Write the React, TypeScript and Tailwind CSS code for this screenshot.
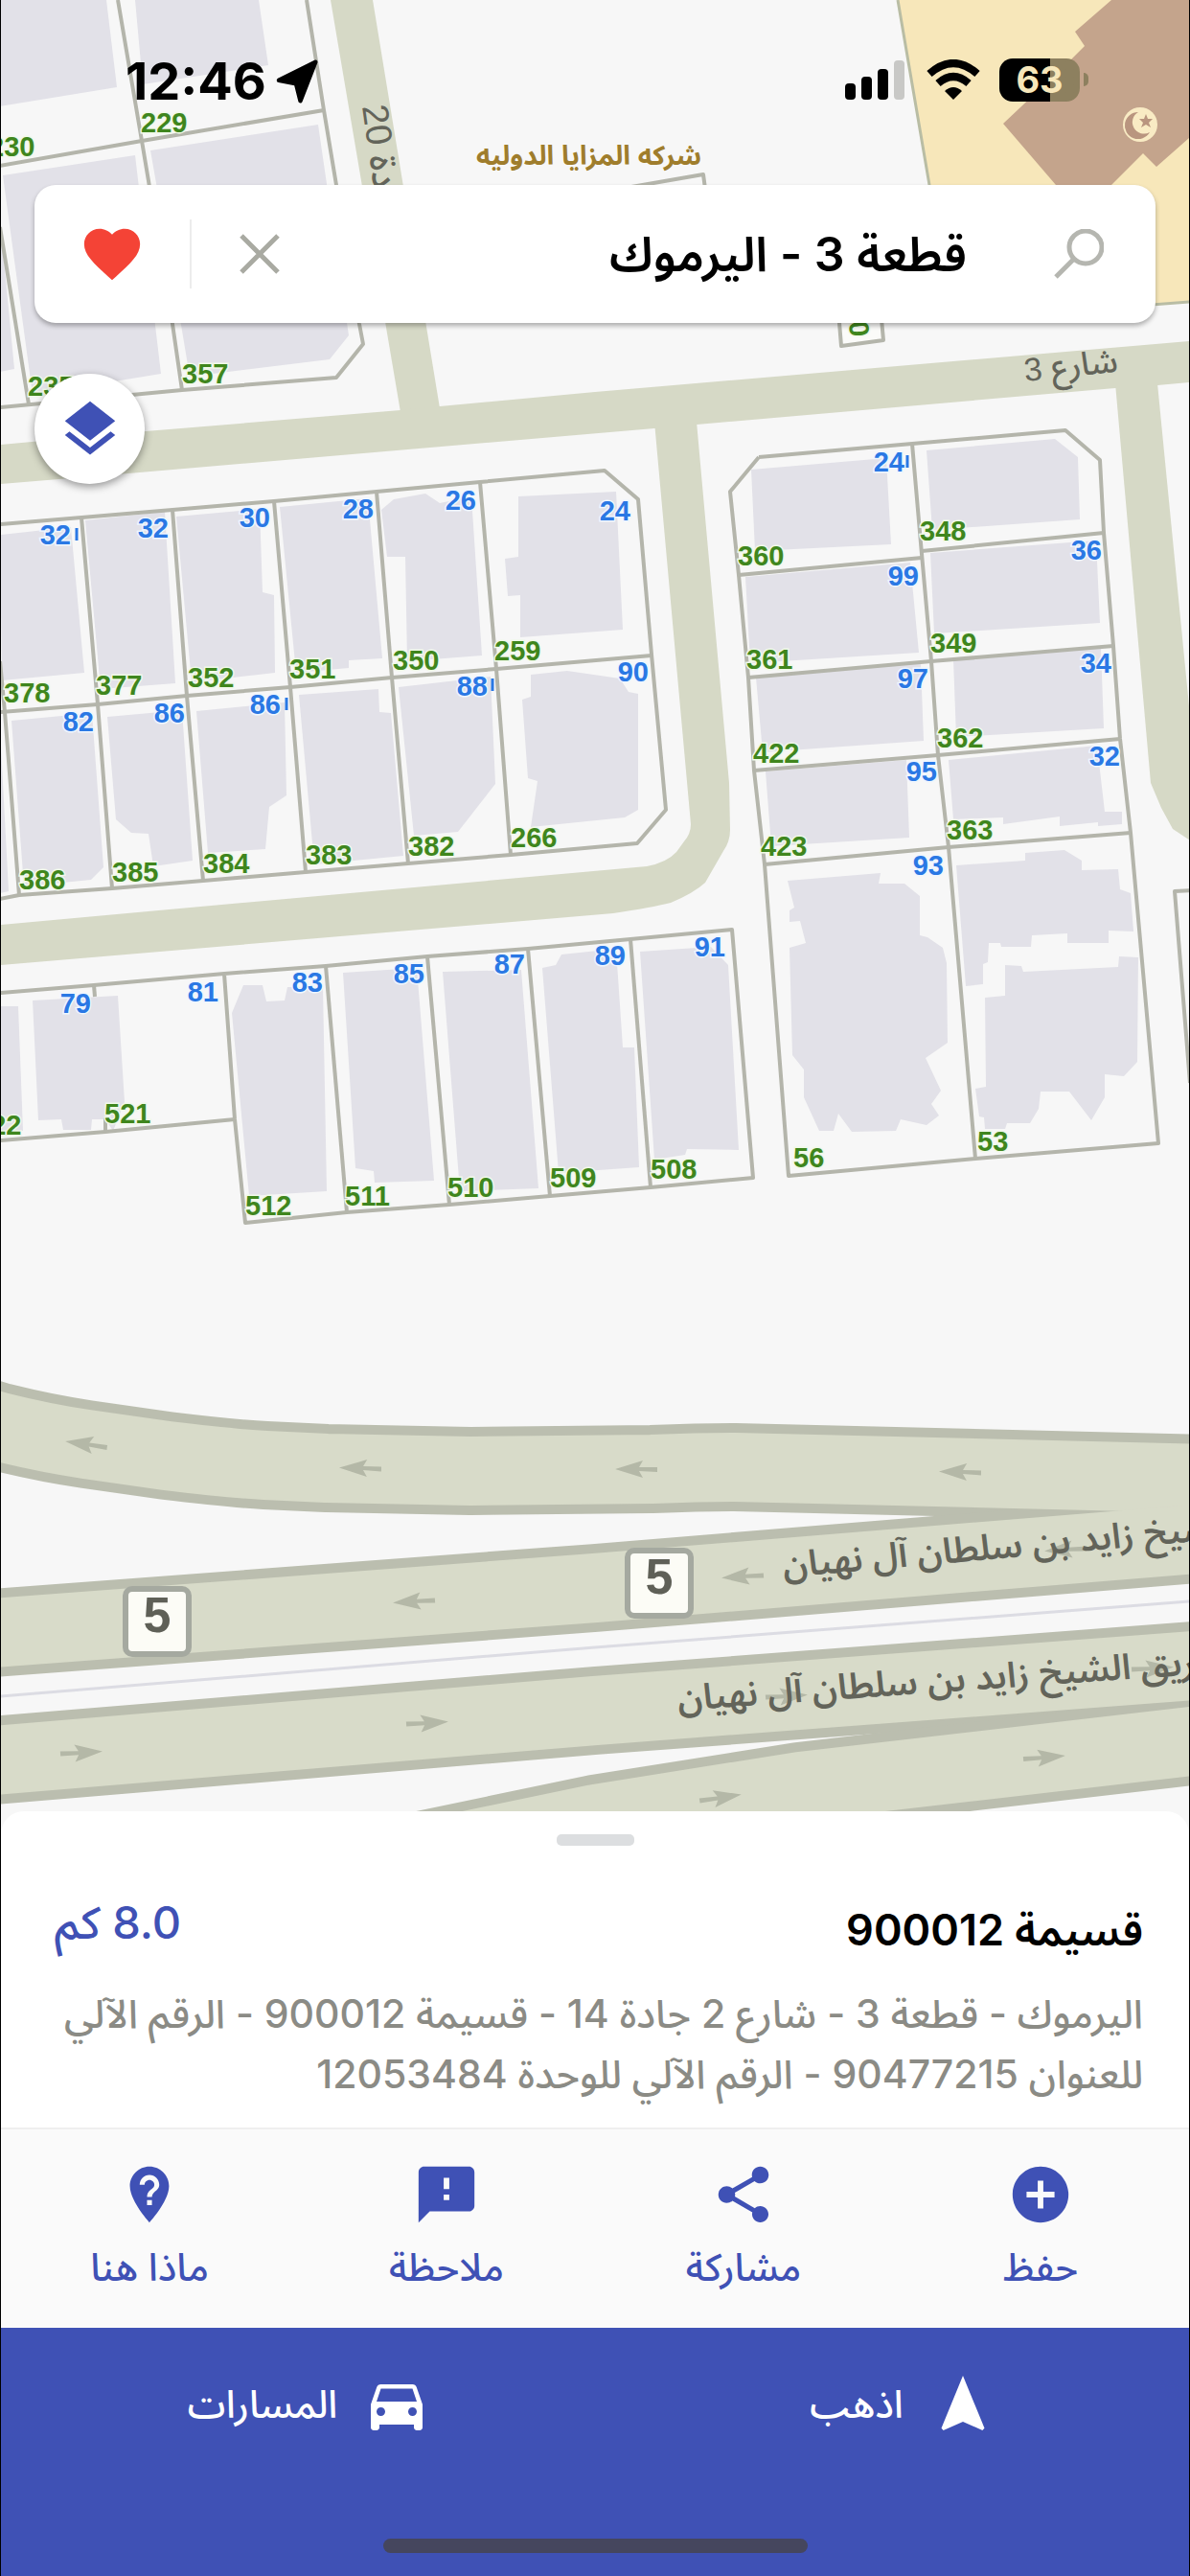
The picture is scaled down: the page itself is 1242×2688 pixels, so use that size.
import React, { useState } from 'react'
import {
  MdAddCircle,
  MdDirectionsCar,
  MdFavorite,
  MdFeedback,
  MdLayers,
  MdNavigation,
  MdNotListedLocation,
  MdShare,
} from 'react-icons/md'

type Label = [x: number, y: number, text: string]
type Arrow = [x: number, y: number, angle: number]

const STREETS = [
  '345,0 389,0 459,426 418,430',
  '0,464 152,450 418,428 459,424 621,409 1242,356 1242,399 1208,402 1164,405 727,443 683,447 134,494 0,505',
  '1164,400 1208,400 1242,747 1242,877 1224,865 1212,843 1201,817',
]

// Inner ring road around the left block
const RING_ROAD =
  'M683 440 L721 860 Q721 870 714 878 L706 889 Q696 900 675 904 L0 965 V1007 L640 953 Q680 947 700 942 Q724 932 736 921 L755 888 Q762 878 762 866 L761 817 L727 440 Z'

const BUILDINGS = [
  '0,0 111,0 122,91 0,111',
  '141,0 270,0 280,68 149,88',
  '3,183 141,162 168,390 34,412',
  '157,157 332,130 364,350 344,375 198,393 190,345',
  '0,230 15,385 0,388',
  '0,558 74,550 88,702 2,710',
  '89,543 172,534 183,713 105,719',
  '184,539 271,531 274,618 286,621 287,702 200,712',
  '292,529 384,520 399,687 364,689 364,697 309,702',
  '398,532 411,521 444,515 459,525 492,518 503,684 425,690 423,581 404,581',
  '541,518 643,513 650,657 543,665 543,621 530,622 527,583 541,581',
  '0,760 9,930 0,932',
  '12,752 96,744 108,905 95,918 25,925',
  '112,748 190,741 201,898 160,904 155,870 137,869 121,855',
  '205,742 297,733 299,830 281,842 277,886 217,890',
  '312,725 395,719 396,743 408,744 421,893 328,902',
  '416,717 512,706 517,818 478,868 432,872',
  '554,704 592,700 647,708 656,722 666,724 666,845 652,853 554,863 561,815 551,812 545,730 554,727',
  '784,490 925,478 930,568 788,575',
  '967,470 1101,458 1125,477 1127,542 973,553',
  '778,602 950,587 959,681 783,692',
  '971,577 1144,564 1148,650 975,661',
  '789,707 961,692 964,773 796,785',
  '995,688 1149,676 1152,760 998,769',
  '799,805 946,793 949,874 805,883',
  '990,793 1145,778 1153,847 1171,847 1171,860 1146,862 1146,858 1106,862 1106,852 1047,860 1047,853 995,855',
  '822,919 919,911 917,922 944,922 960,935 960,976 968,978 984,989 988,1005 989,1088 966,1104 982,1138 972,1152 980,1164 967,1174 940,1168 935,1180 889,1181 875,1162 870,1180 855,1180 839,1145 839,1116 827,1101 824,989 841,984 835,961 824,962 824,950 829,947',
  '998,903 1070,898 1070,890 1111,887 1129,898 1129,908 1167,907 1169,928 1180,932 1183,972 1157,971 1157,984 1114,984 1114,974 1077,976 1076,988 1045,988 1044,984 1032,984 1031,1004 1026,1006 1026,1027 1008,1029',
  '1049,1007 1066,1008 1068,1014 1167,1009 1168,998 1188,999 1187,1108 1173,1123 1153,1121 1153,1145 1139,1169 1116,1139 1086,1139 1084,1157 1075,1172 1051,1172 1049,1178 1028,1178 1027,1166 1022,1165 1018,1136 1029,1134 1028,1041 1049,1039',
  '0,1050 19,1050 24,1180 0,1182',
  '34,1044 123,1039 130,1150 118,1180 110,1168 96,1168 95,1179 66,1179 64,1168 40,1169',
  '254,1028 274,1028 278,1045 297,1044 300,1030 337,1030 341,1243 260,1248 242,1057',
  '358,1015 435,1010 453,1232 391,1234 390,1222 371,1219',
  '462,1014 544,1012 562,1240 480,1243',
  '566,1010 580,1007 586,996 643,990 650,1093 662,1093 667,1218 583,1224',
  '668,993 742,988 760,1007 771,1200 717,1199 715,1205 683,1210',
]

const PLOT_LINES = [
  '123,0 148,147 180,338 190,407',
  '320,0 338,115 351,193 375,338 379,359 351,394 190,407 0,425',
  '0,173 148,147 338,115',
  '0,237 30,422',
  '0,547 85,540 180,532 286,523 393,513 501,503 631,491 666,521 680,683 695,845 665,880 533,892 426,901 319,910 212,919 117,927 20,934 0,938',
  '0,743 102,735 195,726 303,717 409,707 518,698 680,684',
  '85,540 102,735 117,927',
  '180,532 195,726 212,919',
  '286,523 303,717 319,910',
  '393,513 409,707 426,901',
  '501,503 518,698 533,892',
  '0,690 5,743 20,934',
  '792,477 952,463 1112,449 1148,480 1152,556 1162,674 1169,771 1180,869 1209,1193 1018,1209 823,1227 798,902 787,804 781,707 771,600 762,513 792,477',
  '952,463 962,578 972,690 979,788 990,884 1018,1209',
  '771,600 962,582',
  '962,575 1152,556',
  '781,707 972,690 1162,674',
  '787,804 979,788 1169,771',
  '798,902 990,884 1180,869',
  '0,1036 98,1028 234,1016 340,1008 446,998 551,990 658,980 764,970 786,1229 679,1239 574,1248 469,1257 362,1265 256,1276 245,1168 234,1016',
  '340,1008 362,1265',
  '446,998 469,1257',
  '551,990 574,1248',
  '658,980 679,1239',
  '98,1028 99,1040',
  '110,1166 110,1181',
  '0,1190 110,1181 245,1168',
  '1244,929 1226,930 1242,1130',
  '659,195 734,182 736,197',
]

const PLOT_NUMBERS: Label[] = [
  [147, 138, '229'], [-12, 163, '230'], [190, 400, '357'], [29, 413, '235'],
  [4, 733, '378'], [100, 725, '377'], [196, 717, '352'], [302, 708, '351'], [410, 699, '350'], [516, 689, '259'],
  [20, 928, '386'], [117, 920, '385'], [212, 911, '384'], [319, 902, '383'], [426, 893, '382'], [533, 884, '266'],
  [770, 590, '360'], [960, 564, '348'], [779, 698, '361'], [971, 681, '349'],
  [786, 796, '422'], [978, 780, '362'], [794, 893, '423'], [988, 876, '363'],
  [828, 1218, '56'], [1020, 1201, '53'],
  [-26, 1184, '522'], [109, 1172, '521'], [256, 1268, '512'], [360, 1258, '511'],
  [467, 1249, '510'], [574, 1239, '509'], [679, 1230, '508'],
]

const HOUSE_NUMBERS: Label[] = [
  [74, 568, '32'], [176, 561, '32'], [282, 550, '30'], [390, 541, '28'], [497, 532, '26'], [658, 543, '24'],
  [98, 763, '82'], [193, 754, '86'], [293, 745, '86'], [509, 726, '88'], [677, 711, '90'],
  [944, 492, '24'], [959, 611, '99'], [1150, 584, '36'], [969, 718, '97'], [1160, 702, '34'],
  [978, 815, '95'], [1169, 799, '32'], [985, 913, '93'],
  [95, 1057, '79'], [228, 1045, '81'], [337, 1035, '83'], [443, 1026, '85'], [548, 1016, '87'], [653, 1007, '89'], [757, 998, '91'],
]

const NUMBER_TICKS = ['80,551 80,564', '299,728 299,741', '514,708 514,721', '947,475 947,488']

const HIGHWAYS = [
  'M-20 1483 L0 1489 Q48 1501 90 1507 L174 1519 Q240 1527 277 1529 L341 1532 L491 1535 L680 1533 Q730 1531 767 1531 L1260 1543',
  'M-20 1705 L621 1657 L1260 1605',
  'M-20 1838 L621 1785 L1260 1737',
  'M410 1942 L621 1898 L835 1864 L1009 1844 L1260 1815',
]

const ARROWS: Arrow[] = [
  [90, 1507, 8], [376, 1532, 1], [664, 1533, 0], [1002, 1536, 1],
  [432, 1671, -4], [775, 1645, -4], [1112, 1617, -4],
  [85, 1829, 176], [446, 1798, 176], [821, 1770, 176], [1203, 1741, 176],
  [752, 1876, 171], [1090, 1834, 175],
]

const ROUTE_SHIELDS = [
  [164, 1692],
  [688, 1652],
]

const ACTIONS = [
  { label: 'حفظ', Icon: MdAddCircle },
  { label: 'مشاركة', Icon: MdShare },
  { label: 'ملاحظة', Icon: MdFeedback },
  { label: 'ماذا هنا', Icon: MdNotListedLocation },
]

function CityMap() {
  return (
    <svg
      viewBox="1 0 1240 1914"
      preserveAspectRatio="xMidYMin slice"
      direction="ltr"
      className="absolute inset-0 h-full w-full bg-[#f7f7f7]"
      role="img"
      aria-label="خريطة اليرموك"
    >
      <g fill="#d6d9c6">
        {STREETS.map((points) => <polygon key={points} points={points} />)}
        <path d={RING_ROAD} />
      </g>

      <polygon points="937,0 970,193 994,334 1242,315 1242,0" fill="#f7e7ba" />
      <polyline points="937,0 970,193 994,334 1242,315" fill="none" stroke="#b9bda4" strokeWidth="3" />
      <polygon
        points="1160,0 1122,33 1132,48 1118,62 1047,129 1102,193 1130,225 1160,193 1193,160 1207,174 1242,143 1242,0"
        fill="#c4a48c"
      />

      {/* Mosque marker */}
      <circle cx="1190" cy="130" r="18" fill="#f9ebc4" />
      <path d="M1188 117 a14 14 0 1 0 12 21 a11 11 0 1 1 -12 -21z" fill="#b9957f" />
      <path d="M1196 119 l2 5 5 0 -4 4 2 5 -5 -3 -5 3 2 -5 -4 -4 5 0z" fill="#b9957f" />

      <g fill="#e2e1e8">
        {BUILDINGS.map((points) => <polygon key={points} points={points} />)}
      </g>

      <g fill="none" stroke="#b4b5ab" strokeWidth="4" strokeLinejoin="round">
        {PLOT_LINES.map((points) => <polyline key={points} points={points} />)}
        <polygon points="873,300 878,361 922,355 917,300" fill="#fbfbf9" />
      </g>

      <g fill="none" strokeLinejoin="round">
        {HIGHWAYS.map((d) => <path key={d} d={d} stroke="#bbbeaf" strokeWidth="92" />)}
        {HIGHWAYS.map((d) => <path key={d} d={d} stroke="#d8dbc9" strokeWidth="72" />)}
        <path d="M0 1770 L621 1719 L1242 1671" stroke="#dcdce3" strokeWidth="3" />
      </g>

      <g fill="#b4b8a7">
        {ARROWS.map(([x, y, angle]) => (
          <path key={`${x}-${y}`} d="M-22 0 L7 -9 L3 -2 L22 -2 V3 L3 2 L7 9 Z" transform={`translate(${x} ${y}) rotate(${angle})`} />
        ))}
      </g>

      {ROUTE_SHIELDS.map(([x, y]) => (
        <g key={x}>
          <rect x={x - 33} y={y - 34} width="66" height="68" rx="7" fill="#fcfcf6" stroke="#a5a9a0" strokeWidth="6" />
          <text x={x} y={y + 11} textAnchor="middle" className="fill-[#5f6057] font-['Liberation_Sans',sans-serif] text-[52px] font-bold">5</text>
        </g>
      ))}

      <g className="font-['Liberation_Sans',sans-serif] text-[29px] font-bold">
        <g fill="#3f861d" stroke="#f0f9e8" strokeWidth="3" paintOrder="stroke">
          {PLOT_NUMBERS.map(([x, y, text]) => <text key={text} x={x} y={y}>{text}</text>)}
          <text x="886" y="336" transform="rotate(85 886 336)">0</text>
        </g>
        <g fill="#2a78e4" stroke="#eef6ff" strokeWidth="3" paintOrder="stroke" textAnchor="end">
          {HOUSE_NUMBERS.map(([x, y, text]) => <text key={`${x}-${y}`} x={x} y={y}>{text}</text>)}
        </g>
        {NUMBER_TICKS.map((points) => <polyline key={points} points={points} stroke="#2a78e4" strokeWidth="3" />)}
      </g>

      <g direction="rtl" textAnchor="end" className="font-['Liberation_Sans','Noto_Sans_Arabic',sans-serif]">
        <text x="497" y="172" className="fill-[#9f7d2c] text-[28px] font-bold">شركه المزايا الدوليه</text>
        <g fill="#63645a">
          <text x="1070" y="398" transform="rotate(-6 1070 398)" className="text-[34px] font-medium">شارع 3</text>
          <text x="378" y="111" transform="rotate(82 378 111)" className="text-[38px] font-medium">جادة 20</text>
          <text x="818" y="1646" transform="rotate(-5 818 1646)" className="text-[37px] font-semibold">طريق الشيخ زايد بن سلطان آل نهيان</text>
          <text x="708" y="1785" transform="rotate(-4 708 1785)" className="text-[37px] font-semibold">طريق الشيخ زايد بن سلطان آل نهيان</text>
        </g>
      </g>
    </svg>
  )
}

function StatusBar() {
  return (
    <div dir="ltr" className="flex h-[193px] items-start justify-between pt-[58px] pr-[105px] pl-[130px] text-black">
      <div className="flex h-[54px] items-center gap-1">
        <span className="font-[Inter,sans-serif] text-[54px] leading-none font-bold">12:46</span>
        <svg viewBox="0 0 24 24" className="h-[54px] w-[54px]" fill="currentColor" stroke="currentColor" strokeWidth="2" strokeLinejoin="round">
          <path d="M4 11.5 21 3 14 21 12 13Z" />
        </svg>
      </div>
      <div className="flex h-[50px] items-center gap-5">
        <div className="mr-[3px] flex items-end gap-[6px]">
          <span className="h-[17px] w-[11px] rounded-sm bg-black" />
          <span className="h-[24px] w-[11px] rounded-sm bg-black" />
          <span className="h-[32px] w-[11px] rounded-sm bg-black" />
          <span className="h-[41px] w-[11px] rounded-sm bg-[#c8c8c6]" />
        </div>
        <svg viewBox="0 0 56 42" className="h-[42px] w-[56px]" fill="none" stroke="currentColor" strokeWidth="8">
          <path d="M3 15 Q28 -7 53 15" />
          <path d="M12 25 Q28 11 44 25" />
          <path d="M28 42 L19 33 Q28 25 37 33Z" fill="currentColor" stroke="none" />
        </svg>
        <div className="flex items-center gap-1">
          <div className="flex h-[45px] w-[84px] items-center justify-center rounded-[14px] bg-linear-to-r from-black from-63% to-[#8d805f] to-63%">
            <span className="font-[Inter,sans-serif] text-[38px] leading-none font-bold text-[#f7e7ba]">63</span>
          </div>
          <span className="h-[14px] w-[5px] rounded-r-full bg-[#8d805f]" />
        </div>
      </div>
    </div>
  )
}

function SearchBar() {
  const [query, setQuery] = useState('قطعة 3 - اليرموك')

  return (
    <form className="mx-[35px] flex h-36 items-center rounded-[22px] bg-white pr-[54px] pl-[46px] shadow-[0_3px_5px_rgba(0,0,0,0.3)]" onSubmit={(event) => event.preventDefault()}>
      <button type="submit" aria-label="بحث" className="text-[#b5b6b0]">
        <svg viewBox="0 0 52 52" className="h-[52px] w-[52px]" fill="none" stroke="currentColor" strokeWidth="5">
          <circle cx="33" cy="19" r="17" />
          <path d="M21 31 L2 50" />
        </svg>
      </button>
      <input
        type="text"
        aria-label="البحث عن عنوان"
        value={query}
        onChange={(event) => setQuery(event.target.value)}
        className="mr-[91px] min-w-0 flex-1 bg-transparent text-[50px] font-semibold text-black outline-none"
      />
      <button type="button" aria-label="مسح" onClick={() => setQuery('')} className="ml-[50px] text-[#a9aaa2]">
        <svg viewBox="0 0 42 42" className="h-[42px] w-[42px]" fill="none" stroke="currentColor" strokeWidth="5">
          <path d="M2 2 L40 40 M40 2 L2 40" />
        </svg>
      </button>
      <span className="ml-[46px] h-[72px] w-[2px] bg-[#ececec]" />
      <button type="button" aria-label="المفضلة" className="text-[#f44336]">
        <MdFavorite className="h-[70px] w-[70px]" />
      </button>
    </form>
  )
}

function PlaceSheet() {
  return (
    <section className="relative -mt-6 flex flex-col rounded-t-3xl bg-white px-[48px] pt-6 pb-6">
      <span className="h-3 w-[81px] self-center rounded-[5px] bg-[#dcdee0]" />
      <div className="mt-12 flex items-start justify-between pl-2">
        <h1 className="mt-2 text-[45px] leading-[64px] font-semibold text-black">قسيمة 900012</h1>
        <span className="text-[47px] leading-[64px] font-medium text-[#3f51b5]">8.0 كم</span>
      </div>
      <p className="mt-6 text-[41px] leading-[63px] font-medium text-[#8b8b85]">
        اليرموك - قطعة 3 - شارع 2 جادة 14 - قسيمة 900012 - الرقم الآلي للعنوان 90477215 - الرقم الآلي للوحدة 12053484
      </p>
    </section>
  )
}

export default function App() {
  return (
    <div dir="rtl" lang="ar" className="flex min-h-screen flex-col border-x border-black bg-[#f7f7f7] font-[Inter,'Noto_Sans_Arabic',sans-serif]">
      <main className="relative flex-1 overflow-hidden pb-24">
        <CityMap />
        <div className="relative">
          <StatusBar />
          <SearchBar />
          <div className="mt-[53px] flex justify-end px-[35px]">
            <button type="button" aria-label="طبقات الخريطة" className="flex h-[115px] w-[115px] items-center justify-center rounded-full bg-white text-[#3f51b5] shadow-[0_3px_8px_rgba(0,0,0,0.4)]">
              <MdLayers className="h-[70px] w-[70px]" />
            </button>
          </div>
        </div>
      </main>

      <PlaceSheet />

      <nav className="grid grid-cols-4 border-t-2 border-[#efefef] bg-[#fafafa] pt-[33px] pb-9 text-[#3f51b5]">
        {ACTIONS.map(({ label, Icon }) => (
          <button key={label} type="button" className="flex flex-col items-center gap-[14px]">
            <Icon className="h-[70px] w-[70px]" />
            <span className="text-[40px] leading-[54px] font-medium">{label}</span>
          </button>
        ))}
      </nav>

      <footer className="flex flex-col items-center bg-[#3f51b5] text-white">
        <div className="grid w-full grid-cols-2 gap-x-6 pt-11 pl-6">
          <button type="button" className="flex items-center justify-center gap-[26px]">
            <MdNavigation className="h-[72px] w-[72px]" />
            <span className="text-[40px] leading-[54px] font-medium">اذهب</span>
          </button>
          <button type="button" className="flex items-center justify-center gap-[26px]">
            <MdDirectionsCar className="h-[72px] w-[72px]" />
            <span className="text-[40px] leading-[54px] font-medium">المسارات</span>
          </button>
        </div>
        <span className="mt-[104px] mb-6 h-[15px] w-[443px] rounded-full bg-[#45465e]" />
      </footer>
    </div>
  )
}
